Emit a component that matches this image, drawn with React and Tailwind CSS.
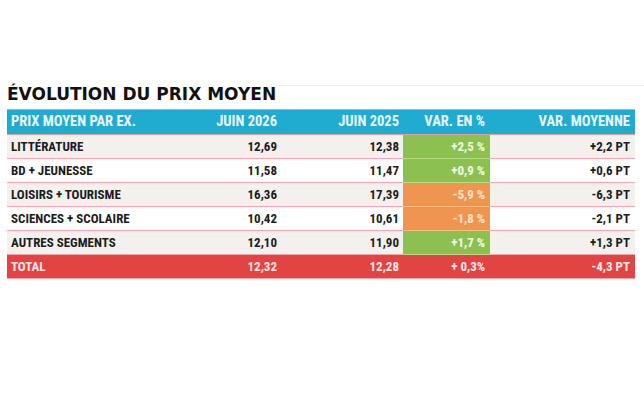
import React from "react";

const rows = [
  { label: "LITTÉRATURE", a: "12,69", b: "12,38", v: "+2,5 %", tone: "up", m: "+2,2 PT" },
  { label: "BD + JEUNESSE", a: "11,58", b: "11,47", v: "+0,9 %", tone: "up", m: "+0,6 PT" },
  { label: "LOISIRS + TOURISME", a: "16,36", b: "17,39", v: "-5,9 %", tone: "down", m: "-6,3 PT" },
  { label: "SCIENCES + SCOLAIRE", a: "10,42", b: "10,61", v: "-1,8 %", tone: "down", m: "-2,1 PT" },
  { label: "AUTRES SEGMENTS", a: "12,10", b: "11,90", v: "+1,7 %", tone: "up", m: "+1,3 PT" },
];

const grid = "grid grid-cols-[173px_101px_122px_87px_145px]";

const App = () => {
  return (
    <div className="w-[644px] h-[414px] bg-white pt-[85px]">
      {/* title */}
      <div className="flex items-start">
        <h1 className="pl-[7px] text-[17px] leading-[19px] font-bold text-[#111] font-['DejaVu_Sans',sans-serif]">
          ÉVOLUTION DU PRIX MOYEN
        </h1>
        <div className="flex-1 ml-[3px] border-t border-[#ededed]" />
      </div>

      <div className="ml-[7px] mt-[5px] w-[628px] text-[13px] font-bold font-[Roboto,sans-serif] [font-stretch:75%]">
        {/* header */}
        <div className={`${grid} h-[26px] bg-[#20acd1] border-t border-b border-[#ec9a9a] text-[14.5px] text-[#e9f6fb]`}>
          <div className="flex items-center pl-[4px]">PRIX MOYEN PAR EX.</div>
          <div className="flex items-center justify-end pr-[4px]">JUIN 2026</div>
          <div className="flex items-center justify-end pr-[4px]">JUIN 2025</div>
          <div className="flex items-center justify-end pr-[5px]">VAR. EN %</div>
          <div className="flex items-center justify-end pr-[5px]">VAR. MOYENNE</div>
        </div>

        {rows.map((r, i) => (
          <div
            key={i}
            className={`${grid} h-[24px] text-[#1c1c1c] ${i % 2 === 0 ? "bg-[#f3f0ee]" : "bg-white"}`}
          >
            <div className="flex items-center pl-[4px] border-b border-[#f2a6a6]">{r.label}</div>
            <div className="flex items-center justify-end pr-[4px] border-b border-[#f2a6a6]">{r.a}</div>
            <div className="flex items-center justify-end pr-[4px] border-b border-[#f2a6a6]">{r.b}</div>
            <div
              className={`flex items-center justify-end pr-[5px] border-b ${
                r.tone === "up"
                  ? "bg-[#8cc152] border-[#b8d98f] text-[#f1f7e6]"
                  : "bg-[#f0954f] border-[#f6bd8f] text-[#fde4d0]"
              }`}
            >
              {r.v}
            </div>
            <div className="flex items-center justify-end pr-[5px] border-b border-[#f2a6a6]">{r.m}</div>
          </div>
        ))}

        {/* total */}
        <div className={`${grid} h-[24px] bg-[#e24343] border-b border-[#f2a6a6] text-[#fbe9e9]`}>
          <div className="flex items-center pl-[4px]">TOTAL</div>
          <div className="flex items-center justify-end pr-[4px]">12,32</div>
          <div className="flex items-center justify-end pr-[4px]">12,28</div>
          <div className="flex items-center justify-end pr-[5px]">+ 0,3%</div>
          <div className="flex items-center justify-end pr-[5px]">-4,3 PT</div>
        </div>
      </div>
    </div>
  );
};

export default App;
